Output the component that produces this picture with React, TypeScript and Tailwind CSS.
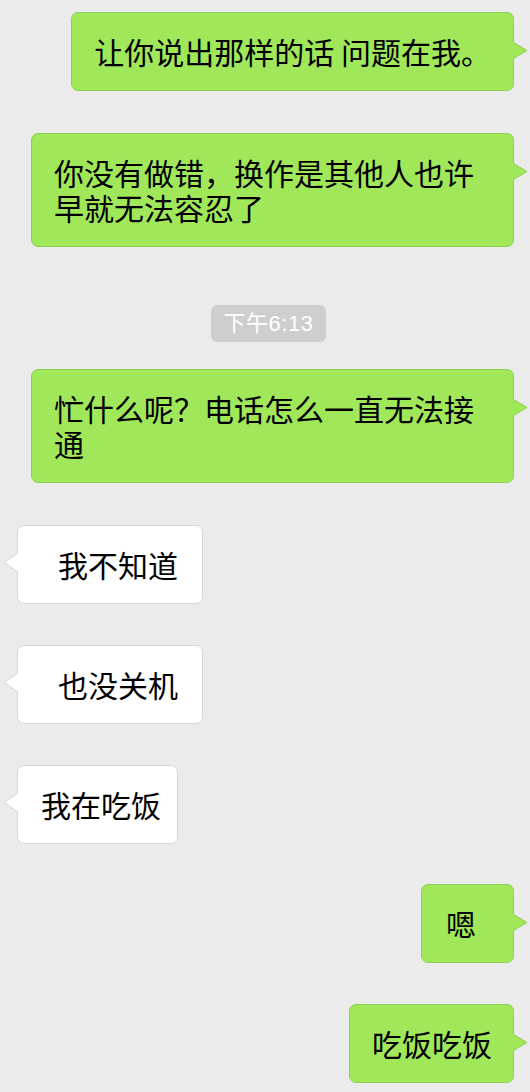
import React from "react";

type Side = "me" | "them";

type Msg =
  | { kind: "time"; text: string; mt: string }
  | { kind: Side; text: string; mt: string; pad: string };

// chat log, top to bottom
const messages: Msg[] = [
  { kind: "me", text: "让你说出那样的话 问题在我。", mt: "mt-0", pad: "pl-[22px] pr-[22px]" },
  { kind: "me", text: "你没有做错，换作是其他人也许早就无法容忍了", mt: "mt-[42px]", pad: "pl-[22px] pr-[22px]" },
  { kind: "time", text: "下午6:13", mt: "mt-[58px]" },
  { kind: "me", text: "忙什么呢？电话怎么一直无法接通", mt: "mt-[27px]", pad: "pl-[22px] pr-[22px]" },
  { kind: "them", text: "我不知道", mt: "mt-[42px]", pad: "pl-[40px] pr-[24px]" },
  { kind: "them", text: "也没关机", mt: "mt-[41px]", pad: "pl-[40px] pr-[24px]" },
  { kind: "them", text: "我在吃饭", mt: "mt-[41px]", pad: "pl-[23px] pr-[16px]" },
  { kind: "me", text: "嗯", mt: "mt-[40px]", pad: "pl-[24px] pr-[37px]" },
  { kind: "me", text: "吃饭吃饭", mt: "mt-[41px]", pad: "pl-[22px] pr-[21px]" },
];

function Tail({ side }: { side: Side }) {
  if (side === "me") {
    return (
      <svg
        className="absolute top-[29px] -right-[15px]"
        width="15"
        height="17"
        viewBox="0 0 15 17"
      >
        <path d="M0 0 L14 8.5 L0 17 Z" fill="#a0e75a" />
        <path d="M0.5 0.5 L14 8.5 L0.5 16.5" fill="none" stroke="#8fcf55" strokeWidth="1" />
      </svg>
    );
  }
  return (
    <svg
      className="absolute top-[27px] -left-[15px]"
      width="15"
      height="19"
      viewBox="0 0 15 19"
    >
      <path d="M15 0 L1 9.5 L15 19 Z" fill="#ffffff" />
      <path d="M14.5 0.5 L1 9.5 L14.5 18.5" fill="none" stroke="#d6d6d6" strokeWidth="1" />
    </svg>
  );
}

function Bubble({ side, text, pad }: { side: Side; text: string; pad: string }) {
  const isMe = side === "me";
  return (
    <div
      className={
        isMe
          ? `relative max-w-[483px] rounded-[7px] border border-[#8fcf55] bg-[#a0e75a] py-[21px] text-[30px] leading-[35px] text-black ${pad}`
          : `relative max-w-[483px] rounded-[7px] border border-[#d6d6d6] bg-white py-[21px] text-[30px] leading-[35px] text-black ${pad}`
      }
    >
      {text}
      <Tail side={side} />
    </div>
  );
}

export default function App() {
  return (
    <div className="min-h-screen w-full bg-[#ebebeb] pt-[12px] font-['Noto_Sans_CJK_SC',sans-serif] flex flex-col">
      {messages.map((m, i) => {
        if (m.kind === "time") {
          return (
            <div key={i} className={`flex justify-center pl-[7px] ${m.mt}`}>
              <div className="flex h-[37px] w-[115px] items-center justify-center rounded-[6px] bg-[#cecece] text-[22px] leading-none text-white font-['Liberation_Sans','Noto_Sans_CJK_SC',sans-serif] tracking-[0.5px]">
                {m.text}
              </div>
            </div>
          );
        }
        return (
          <div
            key={i}
            className={
              m.kind === "me"
                ? `flex justify-end pr-[16px] ${m.mt}`
                : `flex justify-start pl-[17px] ${m.mt}`
            }
          >
            <Bubble side={m.kind} text={m.text} pad={m.pad} />
          </div>
        );
      })}
    </div>
  );
}
